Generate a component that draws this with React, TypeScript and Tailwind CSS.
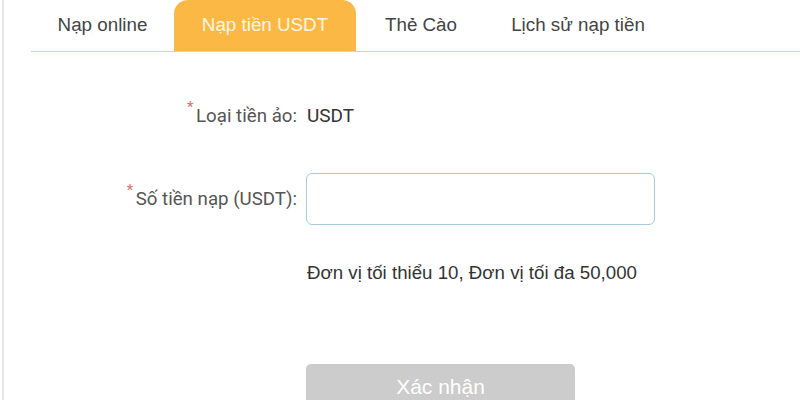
import React from 'react';

const tabs = [
  { label: 'Nạp online', w: 'w-[143px]', active: false },
  { label: 'Nạp tiền USDT', w: 'w-[182px]', active: true },
  { label: 'Thẻ Cào', w: 'w-[130px]', active: false },
  { label: 'Lịch sử nạp tiền', w: 'w-[184px]', active: false },
];

function Label({ text }: { text: string }) {
  return (
    <div className="w-[297px] flex justify-end text-[18.7px] text-[#555] font-['Roboto',sans-serif]">
      <span className="relative">
        <span className="absolute -left-[9px] -top-[6px] text-[15px] text-[#e06c6c]">*</span>
        {text}
      </span>
    </div>
  );
}

export default function App() {
  return (
    <div className="w-[800px] h-[400px] overflow-hidden bg-white pl-[2px]">
      <div className="h-full border-l-2 border-[#e6e6e6] font-['Liberation_Sans',Arial,sans-serif]">
        {/* Tabs */}
        <div className="ml-[27px] flex h-[52px] border-b border-[#e6d38f]">
          {tabs.map(t => (
            <div
              key={t.label}
              className={
                t.active
                  ? `${t.w} flex items-center justify-center rounded-t-[14px] bg-[#fbb845] text-[18.8px] text-[#fff6e0]`
                  : `${t.w} flex items-center justify-center text-[18.8px] text-[#444]`
              }
            >
              {t.label}
            </div>
          ))}
        </div>

        {/* Form */}
        <div className="-ml-[4px] pt-[44px] flex flex-col">
          <div className="flex items-center h-[40px]">
            <Label text="Loại tiền ảo:" />
            <span className="ml-[10px] text-[19px] text-[#333] font-['Roboto',sans-serif]">USDT</span>
          </div>

          <div className="flex items-center mt-[37px]">
            <Label text="Số tiền nạp (USDT):" />
            <input
              className="ml-[9px] w-[349px] h-[52px] rounded-[6px] border border-[#a9c9de] outline-none px-3 text-[16px]"
              type="text"
            />
          </div>

          <div className="ml-[307px] mt-[34px] text-[18.7px] text-[#333]">
            Đơn vị tối thiểu 10, Đơn vị tối đa 50,000
          </div>

          <button className="ml-[306px] mt-[77px] w-[269px] h-[46px] rounded-[5px] bg-[#cccccc] text-white text-[21px]">
            Xác nhận
          </button>
        </div>
      </div>
    </div>
  );
}
